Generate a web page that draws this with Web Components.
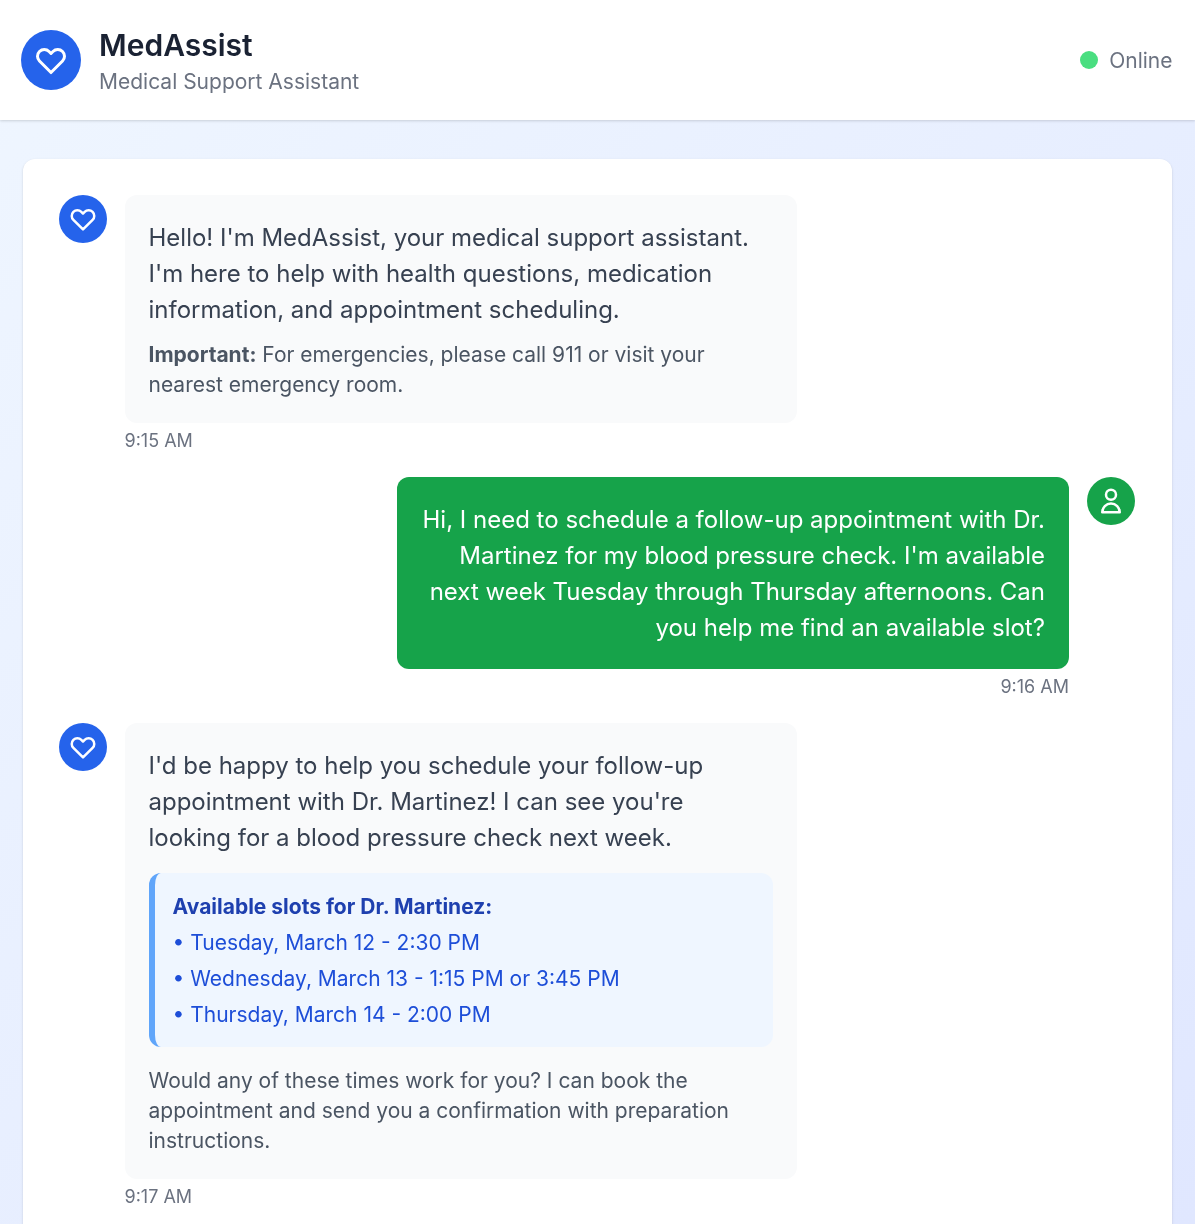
<!DOCTYPE html>
<html lang="en">
<head>
<meta charset="utf-8">
<title>MedAssist</title>
<style>
    html { background: #fff; }
    html, body { margin: 0; height: 100%; overflow: hidden; }
    body {
        background: linear-gradient(135deg, #eff6ff 0%, #e0e7ff 100%);
        font-family: Inter, "Liberation Sans", sans-serif;
        /* the reference is a soft upscale, text is never crisp */
        filter: blur(.45px);
    }
</style>
</head>
<body>
<med-header name="MedAssist" role="Medical Support Assistant" status="Online"></med-header>
<chat-card>
    <chat-message sender="bot" time="9:15 AM">
        <p-main>Hello! I'm MedAssist, your medical support assistant. I'm here to help with health questions, medication information, and appointment scheduling.</p-main>
        <p-note><b>Important:</b> For emergencies, please call 911 or visit your nearest emergency room.</p-note>
    </chat-message>
    <chat-message sender="user" time="9:16 AM">
        <p-main>Hi, I need to schedule a follow-up appointment with Dr. Martinez for my blood pressure check. I'm available next week Tuesday through Thursday afternoons. Can you help me find an available slot?</p-main>
    </chat-message>
    <chat-message sender="bot" time="9:17 AM">
        <p-main>I'd be happy to help you schedule your follow-up appointment with Dr. Martinez! I can see you're looking for a blood pressure check next week.</p-main>
        <slot-box title="Available slots for Dr. Martinez:">
            <div>• Tuesday, March 12 - 2:30 PM</div>
            <div>• Wednesday, March 13 - 1:15 PM or 3:45 PM</div>
            <div>• Thursday, March 14 - 2:00 PM</div>
        </slot-box>
        <p-note>Would any of these times work for you? I can book the appointment and send you a confirmation with preparation instructions.</p-note>
    </chat-message>
</chat-card>

<script>
const heart_path = "M4.318 6.318a4.5 4.5 0 000 6.364L12 20.364l7.682-7.682a4.5 4.5 0 00-6.364-6.364L12 7.636l-1.318-1.318a4.5 4.5 0 00-6.364 0z";
const user_path = "M16 7a4 4 0 11-8 0 4 4 0 018 0zM12 14a7 7 0 00-7 7h14a7 7 0 00-7-7z";

// Round icon used in the header and next to each message
class MedAvatar extends HTMLElement {
    connectedCallback() {
        const size = Number(this.getAttribute('size'));
        const icon = Number(this.getAttribute('icon'));
        const color = this.getAttribute('color');
        const path = this.getAttribute('kind') == 'user' ? user_path : heart_path;
        this.attachShadow({mode: 'open'}).innerHTML = `
        <style>
            :host {
                display: flex;
                flex: none;
                align-items: center;
                justify-content: center;
                width: ${size}px;
                height: ${size}px;
                border-radius: 50%;
                background: ${color};
            }
            svg { display: block; }
        </style>
        <svg width="${icon}" height="${icon}" viewBox="0 0 24 24" fill="none" stroke="#fff" stroke-width="2" stroke-linecap="round" stroke-linejoin="round">
            <path d="${path}"/>
        </svg>`;
    }
}

class MedHeader extends HTMLElement {
    connectedCallback() {
        this.attachShadow({mode: 'open'}).innerHTML = `
        <style>
            :host {
                display: flex;
                align-items: center;
                justify-content: space-between;
                position: relative;
                box-sizing: border-box;
                height: 120px;
                padding: 0 22.5px 0 21px;
                background: #fff;
                box-shadow: 0 1px 3px rgba(0, 0, 0, .1), 0 1px 2px rgba(0, 0, 0, .06);
            }
            .left { display: flex; align-items: center; gap: 18px; }
            .name { font-size: 30px; line-height: 42px; font-weight: 600; color: #1a2233; }
            .role { padding-top: 1px; margin-bottom: -1px; font-size: 21px; line-height: 30px; color: #6b7280; }
            .status { display: flex; align-items: center; gap: 11px; font-size: 21px; line-height: 30px; color: #6b7280; }
            .status span:last-child { padding-top: 2px; }
            .dot { width: 18px; height: 18px; border-radius: 50%; background: #4ade80; }
        </style>
        <div class="left">
            <med-avatar size="60" icon="36" color="#2563eb"></med-avatar>
            <div>
                <div class="name">${this.getAttribute('name')}</div>
                <div class="role">${this.getAttribute('role')}</div>
            </div>
        </div>
        <div class="status"><span class="dot"></span><span>${this.getAttribute('status')}</span></div>`;
    }
}

class ChatCard extends HTMLElement {
    constructor() {
        super();
        this.attachShadow({mode: 'open'}).innerHTML = `
        <style>
            :host {
                display: flex;
                flex-direction: column;
                gap: 24px;
                margin: 39px 23.5px 0 22.5px;
                padding: 36px 36.5px 36px 36px;
                background: #fff;
                border-radius: 12px;
                box-shadow: 0 1px 3px rgba(0, 0, 0, .1), 0 1px 2px rgba(0, 0, 0, .06);
            }
        </style>
        <slot></slot>`;
    }
}

class ChatMessage extends HTMLElement {
    connectedCallback() {
        const is_user = this.getAttribute('sender') == 'user';
        const avatar = is_user
            ? '<med-avatar kind="user" size="48" icon="30" color="#16a34a"></med-avatar>'
            : '<med-avatar size="48" icon="30" color="#2563eb"></med-avatar>';
        this.attachShadow({mode: 'open'}).innerHTML = `
        <style>
            :host {
                display: flex;
                gap: 18px;
                align-items: flex-start;
                justify-content: ${is_user ? 'flex-end' : 'flex-start'};
            }
            .bubble {
                box-sizing: border-box;
                width: 672px;
                padding: 25px 24px 23px;
                border-radius: 12px;
                background: ${is_user ? '#16a34a' : '#f9fafb'};
                color: ${is_user ? '#fff' : '#374151'};
                text-align: ${is_user ? 'right' : 'left'};
            }
            .time {
                margin-top: 6px;
                font-size: 18px;
                line-height: 24px;
                color: #6b7280;
                text-align: ${is_user ? 'right' : 'left'};
            }
        </style>
        ${is_user ? '' : avatar}
        <div>
            <div class="bubble"><slot></slot></div>
            <div class="time">${this.getAttribute('time')}</div>
        </div>
        ${is_user ? avatar : ''}`;
    }
}

class MainText extends HTMLElement {
    constructor() {
        super();
        this.attachShadow({mode: 'open'}).innerHTML = `
        <style>:host { display: block; font-size: 24px; line-height: 36px; }</style>
        <slot></slot>`;
    }
}

class NoteText extends HTMLElement {
    constructor() {
        super();
        this.attachShadow({mode: 'open'}).innerHTML = `
        <style>
            :host { display: block; margin-top: 19px; font-size: 21px; line-height: 30px; color: #4b5563; }
            :host(:nth-child(2)) { margin-top: 12px; }
        </style>
        <slot></slot>`;
    }
}

class SlotBox extends HTMLElement {
    connectedCallback() {
        this.attachShadow({mode: 'open'}).innerHTML = `
        <style>
            :host {
                display: block;
                margin-top: 17px;
                padding: 19px 18px 17px;
                border-left: 6px solid #60a5fa;
                border-radius: 12px;
                background: #eff6ff;
                font-size: 21px;
                line-height: 30px;
                color: #1d4ed8;
            }
            .title { font-weight: 700; color: #1e40af; }
            .list { display: flex; flex-direction: column; gap: 6px; margin-top: 6px; }
        </style>
        <div class="title">${this.getAttribute('title')}</div>
        <div class="list"><slot></slot></div>`;
    }
}

window.customElements.define('med-avatar', MedAvatar);
window.customElements.define('med-header', MedHeader);
window.customElements.define('chat-card', ChatCard);
window.customElements.define('chat-message', ChatMessage);
window.customElements.define('p-main', MainText);
window.customElements.define('p-note', NoteText);
window.customElements.define('slot-box', SlotBox);
</script>
</body>
</html>
